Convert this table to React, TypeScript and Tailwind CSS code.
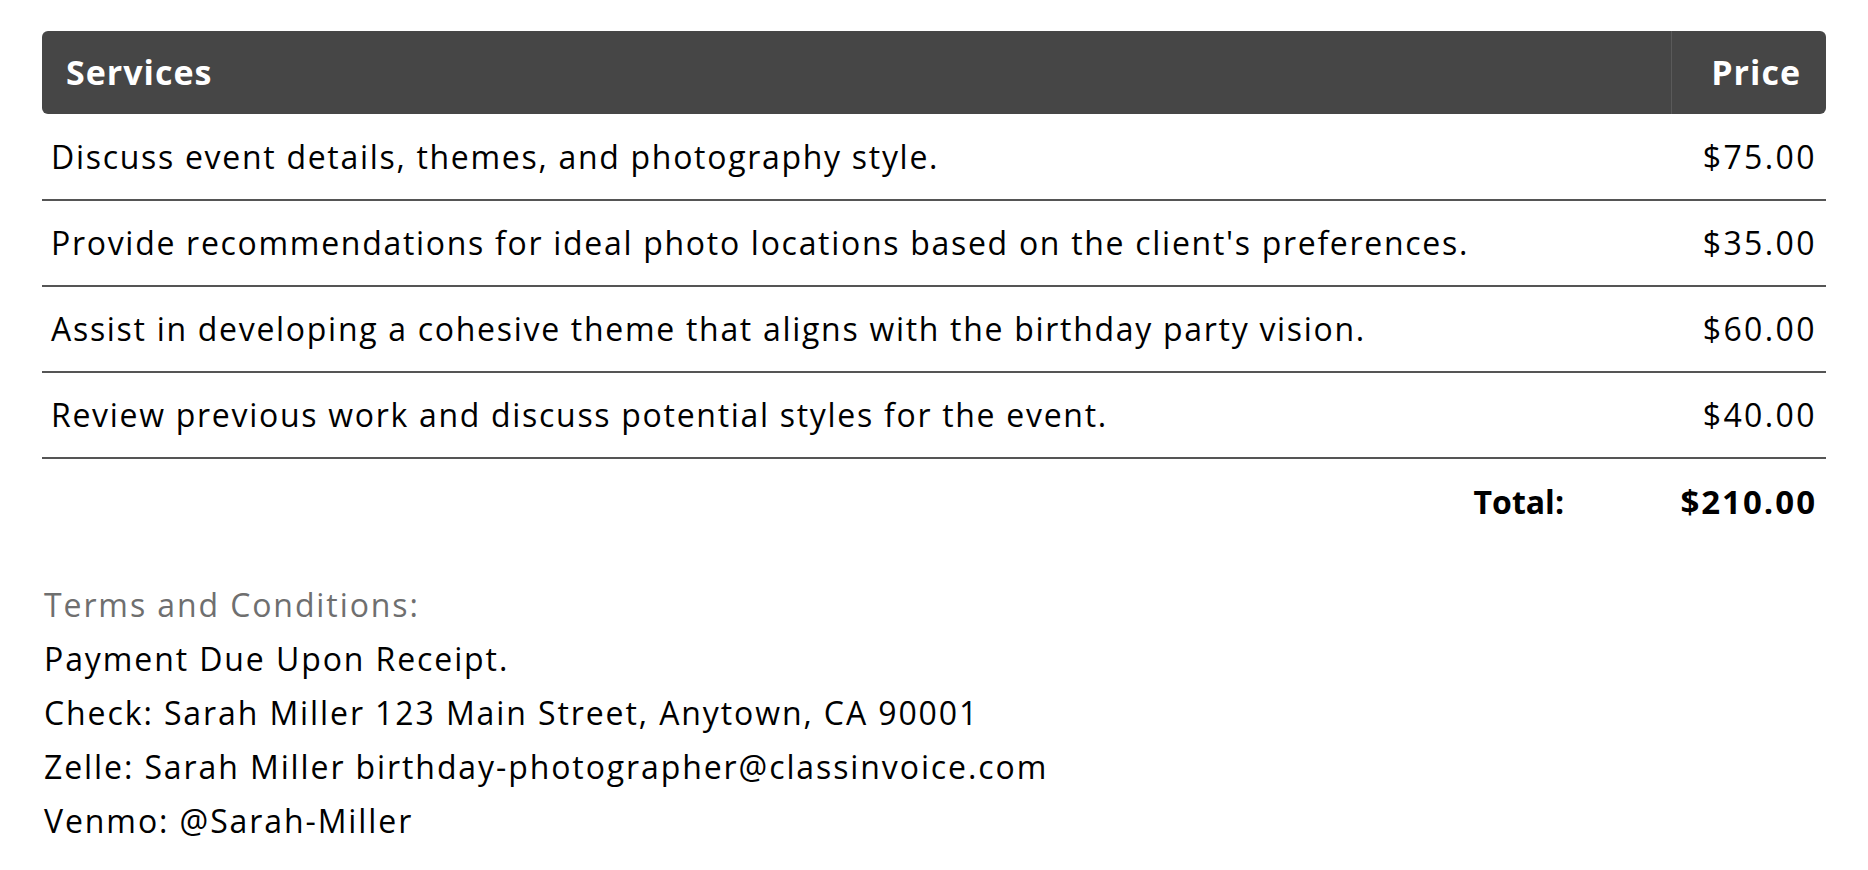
const SERVICES = [
  { desc: "Discuss event details, themes, and photography style.", price: "$75.00" },
  {
    desc: "Provide recommendations for ideal photo locations based on the client's preferences.",
    price: "$35.00",
  },
  {
    desc: "Assist in developing a cohesive theme that aligns with the birthday party vision.",
    price: "$60.00",
  },
  { desc: "Review previous work and discuss potential styles for the event.", price: "$40.00" },
];

const TERMS = [
  "Payment Due Upon Receipt.",
  "Check: Sarah Miller 123 Main Street, Anytown, CA 90001",
  "Zelle: Sarah Miller birthday-photographer@classinvoice.com",
  "Venmo: @Sarah-Miller",
];

export default function App() {
  return (
    <div className="min-h-[870px] bg-white px-[42px] pt-[31px] font-['Open_Sans',sans-serif] text-black">
      <table className="w-full border-collapse">
        <thead>
          <tr className="bg-[#464646] text-white">
            <th className="h-[83px] rounded-l-[6px] pl-[24px] text-left text-[34px] font-bold tracking-[1px]">
              Services
            </th>
            <th className="h-[83px] w-[155px] rounded-r-[6px] border-l border-[#5a5a5a] pr-[25px] text-right text-[34px] font-bold tracking-[1px]">
              Price
            </th>
          </tr>
        </thead>
        <tbody>
          {SERVICES.map((s) => (
            <tr key={s.price} className="h-[86px] border-b-2 border-[#555]">
              <td className="pl-[9px] text-[32px] font-medium tracking-[1.7px]">{s.desc}</td>
              <td className="pr-[9px] text-right text-[32px] font-medium tracking-[2.4px]">
                {s.price}
              </td>
            </tr>
          ))}
          <tr className="h-[86px]">
            <td className="pr-[107px] text-right text-[32px] font-bold">Total:</td>
            <td className="pr-[9px] text-right text-[33px] font-bold tracking-[2px]">$210.00</td>
          </tr>
        </tbody>
      </table>

      {/* terms */}
      <div className="mt-[34px] pl-[2px] font-medium tracking-[1.9px]">
        <p className="text-[32px] leading-[54px] text-[#6f6f6f]">Terms and Conditions:</p>
        {TERMS.map((t) => (
          <p key={t} className="text-[32px] leading-[54px]">
            {t}
          </p>
        ))}
      </div>
    </div>
  );
}
